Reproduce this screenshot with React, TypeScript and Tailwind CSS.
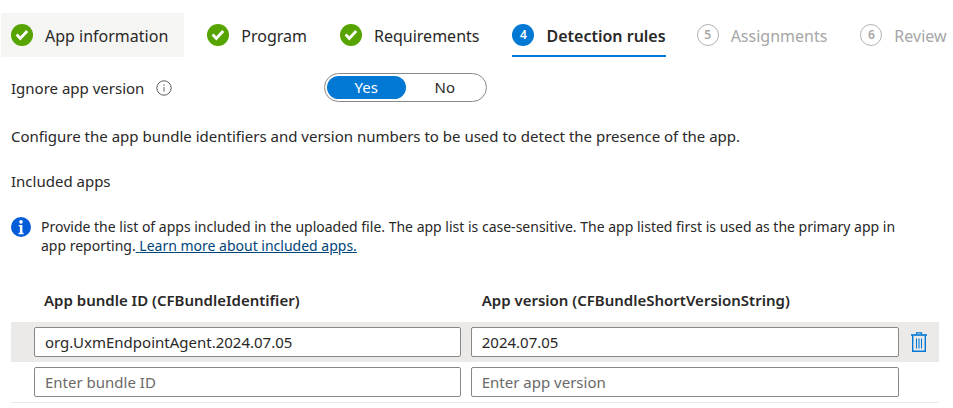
import { useState } from "react";
import clsx from "clsx";

type StepState = "done" | "current" | "upcoming";

const STEPS: { label: string; state: StepState; hovered?: boolean }[] = [
  { label: "App information", state: "done", hovered: true },
  { label: "Program", state: "done" },
  { label: "Requirements", state: "done" },
  { label: "Detection rules", state: "current" },
  { label: "Assignments", state: "upcoming" },
  { label: "Review", state: "upcoming" },
];

const ROWS = [
  { bundleId: "org.UxmEndpointAgent.2024.07.05", version: "2024.07.05" },
  { bundleId: "", version: "" },
];

function CheckIcon() {
  return (
    <svg viewBox="0 0 22 22" className="size-[22px]" aria-hidden="true">
      <circle cx="11" cy="11" r="11" fill="#57a300" />
      <path d="M5.6 10.6 9.3 14.4 16.2 7" fill="none" stroke="#fff" strokeWidth="2.8" />
    </svg>
  );
}

function InfoOutlineIcon() {
  return (
    <svg viewBox="0 0 16 16" className="size-4" aria-hidden="true">
      <circle cx="8" cy="8" r="7.2" fill="none" stroke="#605e5c" strokeWidth="1" />
      <path d="M8 7v4.6" stroke="#605e5c" strokeWidth="1" />
      <circle cx="8" cy="5" r=".7" fill="#605e5c" />
    </svg>
  );
}

function InfoFilledIcon() {
  return (
    <svg viewBox="0 0 20 20" className="size-5 shrink-0" aria-hidden="true">
      <circle cx="10" cy="10" r="10" fill="#015cda" />
      <circle cx="10" cy="4.9" r="1.8" fill="#fff" />
      <path d="M7.8 8h3.6v7.8h1.2v1.4H7.6v-1.4h1.3V9.4H7.8z" fill="#fff" />
    </svg>
  );
}

function TrashIcon() {
  return (
    <svg viewBox="0 0 16 20" className="h-5 w-4" fill="none" stroke="#0078d4" aria-hidden="true">
      <path d="M0 3h16" strokeWidth="1.6" />
      <path d="M5.5 2.6V.8h5v1.8" strokeWidth="1.2" />
      <path d="M1.7 3.5v15.7h12.6V3.5" strokeWidth="1.4" />
      <path d="M5.5 6.5v10M8 6.5v10M10.5 6.5v10" strokeWidth="1.1" />
    </svg>
  );
}

function StepBadge({ state, number }: { state: StepState; number: number }) {
  if (state === "done") return <CheckIcon />;
  return (
    <span
      className={clsx(
        "flex size-[22px] items-center justify-center rounded-full text-xs font-semibold",
        state === "current" ? "bg-[#0078d4] text-white" : "border border-[#b3b3b3] text-[#a6a6a6]",
      )}
    >
      {number}
    </span>
  );
}

export default function App() {
  const [ignoreVersion, setIgnoreVersion] = useState(true);
  const [rows, setRows] = useState(ROWS);

  const update = (index: number, key: "bundleId" | "version", value: string) =>
    setRows(rows.map((row, i) => (i === index ? { ...row, [key]: value } : row)));

  const inputClass =
    "block h-[30px] w-full rounded-xs border border-[#8a8886] bg-white px-2.5 text-[15px] text-[#292827] placeholder:text-[#6b6967]";

  return (
    <main className="overflow-hidden bg-white font-['Noto_Sans','Open_Sans',sans-serif] text-[15px] leading-5 text-[#292827]">
      <nav className="flex gap-[13px] pt-[13px] pl-px whitespace-nowrap">
        {STEPS.map((step, index) => (
          <button
            key={step.label}
            type="button"
            aria-current={step.state === "current" ? "step" : undefined}
            className={clsx(
              "flex h-11 shrink-0 items-center gap-3 text-base",
              step.state === "current" ? "mr-2 ml-2.5 border-b-2 border-[#0078d4] pt-0.5 font-semibold" : "pl-2.5",
              step.state !== "current" && (step.hovered ? "bg-[#f5f5f4] pr-4" : "pr-2.5"),
              step.state === "upcoming" && "text-[#a6a6a6]",
            )}
          >
            <StepBadge state={step.state} number={index + 1} />
            <span className="pt-0.5">{step.label}</span>
          </button>
        ))}
      </nav>

      <div className="pr-3.5 pl-[11px]">
        <div className="mt-4 flex items-center">
          <div className="flex w-[313px] items-center gap-3">
            <span id="ignore-label">Ignore app version</span>
            <InfoOutlineIcon />
          </div>
          <div
            role="group"
            aria-labelledby="ignore-label"
            className="flex h-[29px] w-[163px] rounded-full border border-[#8a8886] p-0.5"
          >
            {[true, false].map((value) => (
              <button
                key={String(value)}
                type="button"
                aria-pressed={ignoreVersion === value}
                onClick={() => setIgnoreVersion(value)}
                className={clsx("flex-1 rounded-full pb-0.5", ignoreVersion === value && "bg-[#0078d4] text-white")}
              >
                {value ? "Yes" : "No"}
              </button>
            ))}
          </div>
        </div>

        <p className="mt-6">
          Configure the app bundle identifiers and version numbers to be used to detect the presence of the app.
        </p>
        <h2 className="mt-[25px]">Included apps</h2>

        <div className="mt-[26px] flex items-start gap-2.5">
          <InfoFilledIcon />
          <p className="max-w-[880px] text-sm leading-[19px]">
            Provide the list of apps included in the uploaded file. The app list is case-sensitive. The app listed
            first is used as the primary app in app reporting.
            <a href="#included-apps" className="text-[#004578] underline">
              {" "}
              Learn more about included apps.
            </a>
          </p>
        </div>

        <table className="mt-6 w-full table-fixed border-collapse border-b border-[#edebe9]">
          <colgroup>
            <col className="w-[49%]" />
            <col />
            <col className="w-10" />
          </colgroup>
          <thead>
            <tr className="h-[43px] text-left">
              <th className="pb-0.5 pl-[33px] font-semibold">App bundle ID (CFBundleIdentifier)</th>
              <th className="pb-0.5 pl-4 font-semibold">App version (CFBundleShortVersionString)</th>
              <th aria-label="Actions" />
            </tr>
          </thead>
          <tbody>
            {rows.map((row, index) => (
              <tr key={index} className={clsx("h-10", row.bundleId && "bg-[#ebeae9]")}>
                <td className="pr-[5px] pl-[23px]">
                  <input
                    type="text"
                    aria-label="App bundle ID"
                    placeholder="Enter bundle ID"
                    value={row.bundleId}
                    onChange={(e) => update(index, "bundleId", e.target.value)}
                    className={inputClass}
                  />
                </td>
                <td className="pl-[5px]">
                  <input
                    type="text"
                    aria-label="App version"
                    placeholder="Enter app version"
                    value={row.version}
                    onChange={(e) => update(index, "version", e.target.value)}
                    className={inputClass}
                  />
                </td>
                <td className="pl-3">
                  {row.bundleId && (
                    <button
                      type="button"
                      aria-label="Delete app"
                      className="block"
                      onClick={() => setRows(rows.filter((_, i) => i !== index))}
                    >
                      <TrashIcon />
                    </button>
                  )}
                </td>
              </tr>
            ))}
          </tbody>
        </table>
      </div>
    </main>
  );
}
